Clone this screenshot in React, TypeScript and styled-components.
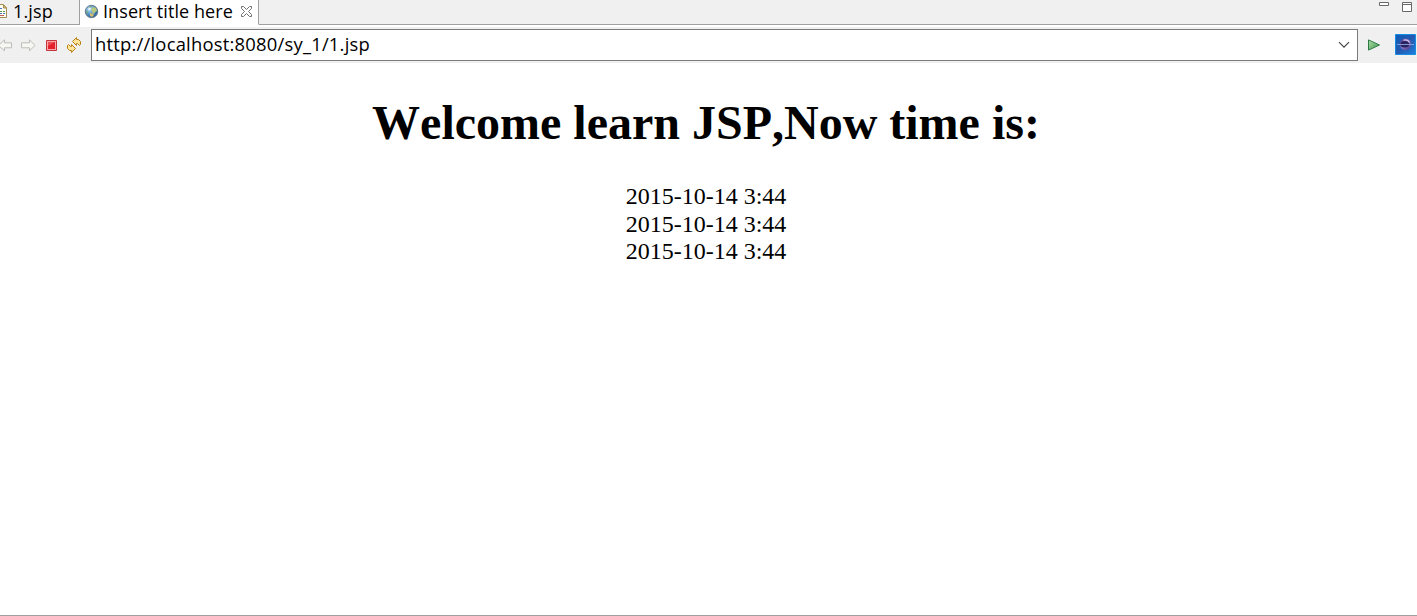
import React from "react";
import styled, { createGlobalStyle } from "styled-components";

const GlobalStyle = createGlobalStyle`
  * { box-sizing: border-box; }
  body { margin: 0; background: #fff; overflow: hidden; }
  svg { display: block; flex: none; }
`;

const Window = styled.div`
  display: flex;
  flex-direction: column;
  width: 1417px;
  height: 616px;
  background: #fff;
  border-bottom: 1px solid #a0a0a0;
  font-family: "Open Sans", "Noto Sans", sans-serif;
  color: #000;
`;

const TabBar = styled.div`
  display: flex;
  height: 25px;
  flex: none;
`;

const Tab = styled.div<{ $active?: boolean; $width: number }>`
  display: flex;
  align-items: flex-start;
  width: ${(p) => p.$width}px;
  background: ${(p) => (p.$active ? "#fff" : "#f0f0f0")};
  border-right: 1px solid #a0a0a0;
  border-bottom: 1px solid ${(p) => (p.$active ? "#fff" : "#a0a0a0")};
  padding-left: ${(p) => (p.$active ? 4 : 0)}px;
`;

const TabIcon = styled.span`
  padding-top: 4px;
`;

const TabLabel = styled.span<{ $gap: number; $spacing: number; $width?: number }>`
  width: ${(p) => (p.$width ? `${p.$width}px` : "auto")};
  margin-left: ${(p) => p.$gap}px;
  font-size: 18px;
  line-height: 23px;
  letter-spacing: ${(p) => p.$spacing}px;
  white-space: pre;
`;

const CloseButton = styled.span`
  padding: 6px 0 0 7px;
`;

const WindowControls = styled.div`
  display: flex;
  flex: 1;
  justify-content: flex-end;
  gap: 13px;
  padding: 2px 5px 0 0;
  background: #f0f0f0;
  border-bottom: 1px solid #a0a0a0;
`;

const Toolbar = styled.div`
  display: flex;
  align-items: center;
  height: 36px;
  margin-top: 2px;
  flex: none;
  background: #f0f0f0;
`;

const NavButtons = styled.div`
  display: flex;
  align-items: center;
  width: 91px;
  flex: none;
`;

const NavButton = styled.span<{ $gap?: number }>`
  margin-left: ${(p) => p.$gap ?? 0}px;
`;

const AddressBox = styled.div`
  display: flex;
  align-items: center;
  justify-content: space-between;
  width: 1267px;
  height: 32px;
  padding: 0 7px 0 3px;
  background: #fff;
  border: 1px solid #7a7a7a;
`;

const Address = styled.span`
  padding-bottom: 2px;
  font-size: 18.4px;
  line-height: 28px;
  letter-spacing: 0.22px;
`;

const ToolbarActions = styled.div`
  display: flex;
  align-items: center;
  gap: 14px;
  padding: 0 0 1px 9px;
`;

const Page = styled.main`
  flex: 1;
  padding-right: 5px;
  text-align: center;
  font-family: "Liberation Serif", serif;
  font-kerning: none;
`;

const Heading = styled.h1`
  margin: 32px 0 32px;
  font-size: 48px;
  line-height: 56px;
  font-weight: bold;
`;

const TimeLine = styled.div`
  font-size: 24px;
  line-height: 27.5px;
`;

const FileIcon = () => (
  <svg width="8" height="15" viewBox="0 0 8 15">
    <path d="M0 .5H3.5L6.5 4v9.5H0" fill="#fffef4" stroke="#a38b52" />
    <path d="M3.5 1v3h3z" fill="#e4c77e" stroke="#a38b52" />
    <path d="M0 4.5h2M0 9.5h2M3 9.5h2" stroke="#4974b8" />
    <path d="M0 7.5h2M3 7.5h2" stroke="#50984b" />
    <path d="M0 11.5h4" stroke="#c45d55" />
  </svg>
);

const GlobeIcon = () => (
  <svg width="15" height="15" viewBox="0 0 15 15">
    <defs>
      <radialGradient id="sea" cx=".35" cy=".3" r=".75">
        <stop offset="0" stopColor="#c4e4f6" />
        <stop offset=".5" stopColor="#5a9cd0" />
        <stop offset="1" stopColor="#21568c" />
      </radialGradient>
    </defs>
    <circle cx="7.5" cy="7.5" r="6.2" fill="url(#sea)" stroke="#627b91" />
    <path d="m9 3 3 1 1 3-2 1-1 2-2-1 .5-2L7 6z" fill="#b9c979" />
    <path d="m6 9 3 1 1 1-2 2-2-1z" fill="#d5bd70" />
    <path d="m3 6 1 3-1 1-1-2zM6 2l2 0-1 1.5-2 0z" fill="#7da873" />
    <path d="m4 5 2-1.5 1 1-2 2z" fill="#f0f5f7" />
  </svg>
);

const CloseIcon = () => (
  <svg width="11" height="11" viewBox="0 0 11 11">
    <path
      d="M.5.5h2l3 3 3-3h2v2l-3 3 3 3v2h-2l-3-3-3 3h-2v-2l3-3-3-3z"
      fill="#fff"
      stroke="#707070"
    />
  </svg>
);

const BackIcon = () => (
  <svg width="12" height="13" viewBox="0 0 12 13">
    <path d="M-1.5 6.5 4.5.8v3h7v5h-7v3z" fill="#f6f6f2" stroke="#bcbcb8" />
  </svg>
);

const ForwardIcon = () => (
  <svg width="15" height="13" viewBox="0 0 15 13">
    <path d="M14 6.5 8.5.8v3h-8v5h8v3z" fill="#f6f6f2" stroke="#bcbcb8" />
  </svg>
);

const StopIcon = () => (
  <svg width="11" height="11" viewBox="0 0 11 11">
    <path d="M.5.5h10v10H.5z" fill="#f9a9a9" stroke="#c5333b" />
    <path d="M2 2h7v7H2z" fill="#e3202b" />
    <path d="M2 2h7L2 6z" fill="#ed4b52" />
  </svg>
);

const RefreshIcon = () => (
  <svg width="15" height="16" viewBox="0 0 15 16" strokeLinejoin="round">
    <path d="m5.5 4.5 4-4v2h2l2 2v3l-1 1-2-2H9.5v2z" fill="#ffe59a" stroke="#b98016" />
    <path d="m8.5 11.5-4 4v-2h-2l-2-2v-3l1-1 2 2h1v-2z" fill="#ffe59a" stroke="#b98016" />
  </svg>
);

const MinimizeIcon = () => (
  <svg width="10" height="10" viewBox="0 0 10 10">
    <path d="M.5.5h9v3h-9z" fill="#fff" stroke="#686868" />
  </svg>
);

const MaximizeIcon = () => (
  <svg width="10" height="10" viewBox="0 0 10 10">
    <path d="M.5.5h9v9h-9zM.5 2.5h9" fill="#fff" stroke="#686868" />
  </svg>
);

const ChevronIcon = () => (
  <svg width="12" height="8" viewBox="0 0 12 8">
    <path d="m1 1.2 5 5 5-5" fill="none" stroke="#444" strokeWidth="1.2" />
  </svg>
);

const GoIcon = () => (
  <svg width="14" height="13" viewBox="0 0 14 13">
    <defs>
      <linearGradient id="go" x2="1" y2="1">
        <stop stopColor="#b4dfa8" />
        <stop offset="1" stopColor="#38964b" />
      </linearGradient>
    </defs>
    <path d="M1.5 1.9v10.2L12.5 7z" fill="url(#go)" stroke="#2b7a45" />
  </svg>
);

const EclipseIcon = () => (
  <svg width="21" height="21" viewBox="0 0 21 21">
    <defs>
      <linearGradient id="sky" x2="1" y2="1">
        <stop stopColor="#0d5db8" />
        <stop offset=".5" stopColor="#2459b0" />
        <stop offset="1" stopColor="#1b80dc" />
      </linearGradient>
      <linearGradient id="planet" x2="1" y2="1">
        <stop stopColor="#4a3c90" />
        <stop offset=".5" stopColor="#8573bd" />
        <stop offset="1" stopColor="#403585" />
      </linearGradient>
    </defs>
    <path d="M.5.5h20v20H.5z" fill="url(#sky)" stroke="#168de5" />
    <circle cx="10.5" cy="10.3" r="5.8" fill="url(#planet)" />
    <ellipse cx="9.8" cy="10.3" rx="4.4" ry="3.2" fill="#29235f" />
    <path d="M2 10.5h17" stroke="#8fa5e0" strokeWidth=".9" />
    <path d="M8.5 6.2q4-1.4 6 2.3" fill="none" stroke="#d9c6ee" strokeWidth="1.2" />
  </svg>
);

const times = ["2015-10-14 3:44", "2015-10-14 3:44", "2015-10-14 3:44"];

export default function App() {
  return (
    <Window>
      <GlobalStyle />
      <TabBar>
        <Tab $width={80}>
          <TabIcon><FileIcon /></TabIcon>
          <TabLabel $gap={5} $spacing={0.15}>1.jsp</TabLabel>
        </Tab>
        <Tab $active $width={179}>
          <TabIcon><GlobeIcon /></TabIcon>
          <TabLabel $gap={4} $spacing={0.08} $width={131}>Insert title here</TabLabel>
          <CloseButton><CloseIcon /></CloseButton>
        </Tab>
        <WindowControls><MinimizeIcon /><MaximizeIcon /></WindowControls>
      </TabBar>
      <Toolbar>
        <NavButtons>
          <NavButton><BackIcon /></NavButton>
          <NavButton $gap={9}><ForwardIcon /></NavButton>
          <NavButton $gap={10}><StopIcon /></NavButton>
          <NavButton $gap={10}><RefreshIcon /></NavButton>
        </NavButtons>
        <AddressBox>
          <Address>http://localhost:8080/sy_1/1.jsp</Address>
          <ChevronIcon />
        </AddressBox>
        <ToolbarActions><GoIcon /><EclipseIcon /></ToolbarActions>
      </Toolbar>
      <Page>
        <Heading>Welcome learn JSP,Now time is:</Heading>
        {times.map((time, i) => <TimeLine key={i}>{time}</TimeLine>)}
      </Page>
    </Window>
  );
}
